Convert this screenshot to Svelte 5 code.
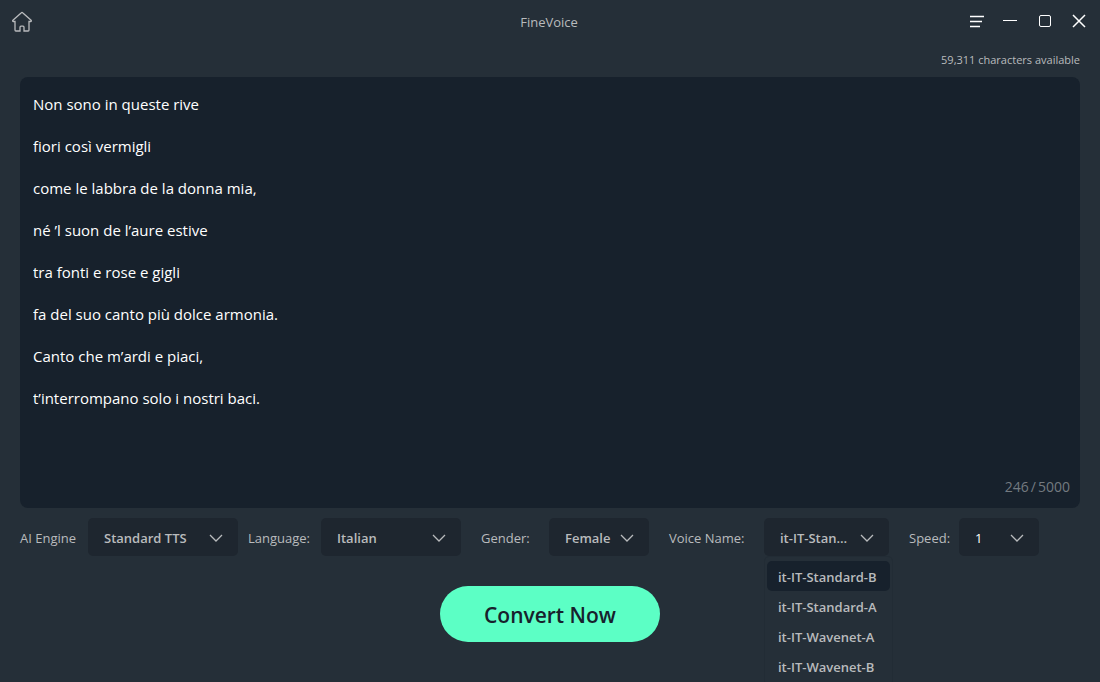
<script lang="ts">
	const maxLength = 5000;
	const available = 59311;

	const engines = ['Standard TTS', 'Neural TTS'];
	const languages = ['Italian', 'English', 'French', 'German', 'Spanish'];
	const genders = ['Female', 'Male'];
	const voices = ['it-IT-Standard-B', 'it-IT-Standard-A', 'it-IT-Wavenet-A', 'it-IT-Wavenet-B'];
	const speeds = ['0.5', '1', '1.5', '2'];

	let engine = $state('Standard TTS');
	let language = $state('Italian');
	let gender = $state('Female');
	let voice = $state('it-IT-Standard-B');
	let speed = $state('1');
	let voiceOpen = $state(true);

	let text = $state(
		[
			'Non sono in queste rive',
			'fiori così vermigli',
			'come le labbra de la donna mia,',
			'né ’l suon de l’aure estive',
			'tra fonti e rose e gigli',
			'fa del suo canto più dolce armonia.',
			'Canto che m’ardi e piaci,',
			't’interrompano solo i nostri baci.'
		].join('\n\n')
	);

	// line breaks are billed as CRLF
	let used = $derived(text.replace(/\n/g, '\r\n').length);

	function toggleVoices(e: MouseEvent) {
		e.preventDefault();
		voiceOpen = !voiceOpen;
	}

	function pickVoice(name: string) {
		voice = name;
		voiceOpen = false;
	}
</script>

{#snippet chevron()}
	<svg class="chevron" width="14" height="8" viewBox="0 0 14 8" aria-hidden="true">
		<path d="M1 1l6 6 6-6" />
	</svg>
{/snippet}

<div class="app">
	<header>
		<button class="icon" aria-label="Home">
			<svg width="22" height="22" viewBox="0 0 22 22">
				<path
					class="home"
					d="M4 10.5v8.6c0 .6.3.9.9.9H9v-3.8c0-.6.4-1 1-1h2c.6 0 1 .4 1 1V20h4.1c.6 0 .9-.3.9-.9v-8.6h1.6c.8 0 1-.7.5-1.2l-8.2-7.4a1.3 1.3 0 0 0-1.8 0L1.9 9.3c-.5.5-.3 1.2.5 1.2z"
				/>
			</svg>
		</button>
		<h1>FineVoice</h1>
		<div class="window-buttons">
			<button class="icon" aria-label="Menu">
				<svg width="16" height="16" viewBox="0 0 16 16">
					<path class="bold" d="M1 3.5h14M1 8.5h12M1 13.5h10" />
				</svg>
			</button>
			<button class="icon" aria-label="Minimize">
				<svg width="16" height="16" viewBox="0 0 16 16"><path d="M0 7.5h14" /></svg>
			</button>
			<button class="icon" aria-label="Maximize">
				<svg width="16" height="16" viewBox="0 0 16 16">
					<rect x="2.5" y="2.5" width="11" height="11" rx="1.5" />
				</svg>
			</button>
			<button class="icon" aria-label="Close">
				<svg width="16" height="16" viewBox="0 0 16 16">
					<path class="bold" d="M2 2l12 12M14 2L2 14" />
				</svg>
			</button>
		</div>
	</header>

	<main>
		<p class="available">{available.toLocaleString('en-US')} characters available</p>

		<div class="editor">
			<textarea aria-label="Text to convert" maxlength={maxLength} spellcheck="false" bind:value={text}
			></textarea>
			<div class="count"><span>{used}</span><span>/</span><span>{maxLength}</span></div>
		</div>

		<div class="options">
			<label for="engine">AI Engine</label>
			<div class="select">
				<select id="engine" bind:value={engine}>
					{#each engines as item}<option>{item}</option>{/each}
				</select>
				{@render chevron()}
			</div>

			<label class="near" for="language">Language:</label>
			<div class="select">
				<select id="language" bind:value={language}>
					{#each languages as item}<option>{item}</option>{/each}
				</select>
				{@render chevron()}
			</div>

			<label class="far" for="gender">Gender:</label>
			<div class="select">
				<select id="gender" bind:value={gender}>
					{#each genders as item}<option>{item}</option>{/each}
				</select>
				{@render chevron()}
			</div>

			<label class="far" for="voice">Voice Name:</label>
			<div class="select">
				<select id="voice" bind:value={voice} onmousedown={toggleVoices}>
					{#each voices as item}<option>{item}</option>{/each}
				</select>
				{@render chevron()}
				{#if voiceOpen}
					<ul class="menu">
						{#each voices as item}
							<li>
								<button class:selected={item === voice} onclick={() => pickVoice(item)}>{item}</button>
							</li>
						{/each}
					</ul>
				{/if}
			</div>

			<label class="far" for="speed">Speed:</label>
			<div class="select speed">
				<select id="speed" bind:value={speed}>
					{#each speeds as item}<option>{item}</option>{/each}
				</select>
				{@render chevron()}
			</div>
		</div>

		<button class="convert">Convert Now</button>
	</main>
</div>

<style>
	:global(body) {
		background: #252f38;
	}

	.app {
		display: flex;
		flex-direction: column;
		height: 100vh;
		overflow: hidden;
		background: #252f38;
		color: #b9bbbd;
		font-family: 'Segoe UI', 'Open Sans', 'Noto Sans', sans-serif;
		font-size: 13px;
	}

	button,
	select,
	textarea {
		border: none;
		outline: none;
		font: inherit;
		color: inherit;
	}

	button {
		padding: 0;
		background: none;
		cursor: pointer;
	}

	svg {
		display: block;
		fill: none;
		stroke: #ffffff;
	}

	header {
		display: grid;
		grid-template-columns: 1fr auto 1fr;
		align-items: center;
		height: 44px;
		padding: 0 13px 0 11px;
	}

	header .icon {
		justify-self: start;
	}

	.home {
		stroke: #b9bbbd;
		stroke-width: 1.3;
	}

	.bold {
		stroke-width: 1.5;
	}

	h1 {
		margin: 0;
		font-size: 13px;
		font-weight: 400;
	}

	.window-buttons {
		display: flex;
		justify-content: flex-end;
		gap: 18px;
		padding-bottom: 2px;
	}

	main {
		display: flex;
		flex: 1;
		flex-direction: column;
		min-height: 0;
		padding: 0 20px 40px;
	}

	.available {
		margin: 0;
		padding: 7px 0 8px;
		font-size: 11px;
		line-height: 18px;
		text-align: right;
	}

	.editor {
		display: flex;
		flex: 1;
		flex-direction: column;
		min-height: 0;
		padding: 17px 10px 11px 13px;
		border-radius: 8px;
		background: #17212c;
	}

	textarea {
		flex: 1;
		padding: 0;
		resize: none;
		background: none;
		color: #ffffff;
		font-size: 15px;
		line-height: 21px;
	}

	.count {
		display: flex;
		gap: 2px;
		align-self: flex-end;
		color: #737a80;
		font-size: 14px;
		line-height: 20px;
	}

	.options {
		display: grid;
		grid-template-columns: 68px 150px 83px 140px 88px 100px 115px 125px 70px 80px;
		align-items: center;
		margin-top: 10px;
	}

	.options label {
		padding-top: 1px;
		white-space: nowrap;
	}

	.options .near {
		padding-left: 10px;
	}

	.options .far {
		padding-left: 20px;
	}

	.select {
		position: relative;
	}

	select {
		display: block;
		width: 100%;
		height: 38px;
		padding: 2px 36px 0 16px;
		appearance: none;
		border-radius: 5px;
		background: #1e262f;
		font-weight: 600;
		text-overflow: ellipsis;
	}

	.speed select {
		color: #ffffff;
		font-weight: 400;
	}

	.chevron {
		position: absolute;
		top: 16px;
		right: 15px;
		stroke: #b9bbbd;
		stroke-width: 1.3;
		pointer-events: none;
	}

	.menu {
		position: absolute;
		top: 38px;
		left: 0;
		z-index: 1;
		margin: 0;
		padding: 4px 2px;
		border: 1px solid #222c35;
		border-radius: 5px;
		background: #252f38;
		list-style: none;
	}

	.menu button {
		width: 123px;
		height: 30px;
		padding: 1px 11px 0;
		border-radius: 5px;
		font-weight: 600;
		text-align: left;
		white-space: nowrap;
	}

	.menu button.selected {
		background: #17212c;
	}

	.convert {
		align-self: center;
		width: 220px;
		height: 56px;
		margin-top: 30px;
		padding-top: 2px;
		border-radius: 28px;
		background: #5cffc5;
		color: #17212c;
		font-size: 21px;
		font-weight: 600;
	}
</style>
